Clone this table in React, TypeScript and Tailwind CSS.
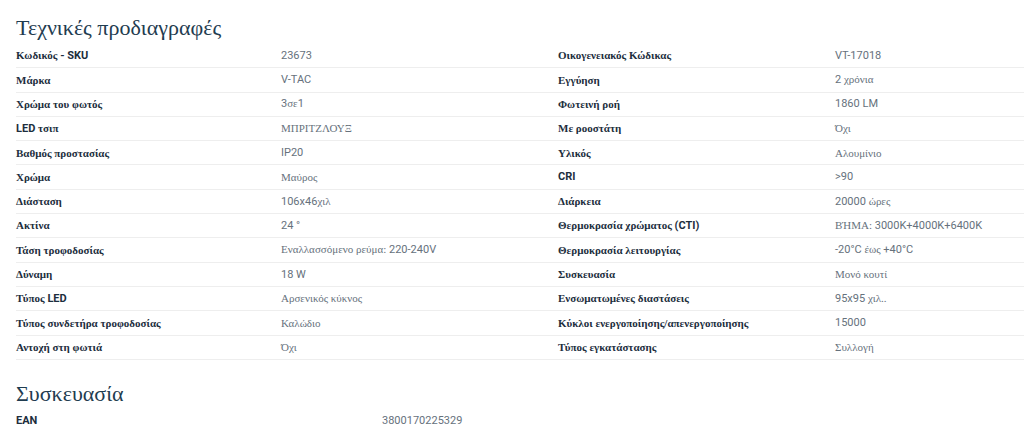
import React from "react";

const GREEK = /([\u0370-\u03FF\u1F00-\u1FFF]+(?:[\s.,:/]+[\u0370-\u03FF\u1F00-\u1FFF]+)*[.:,]*)/;

function Mixed({ text }: { text: string }) {
  const parts = text.split(GREEK).filter((p) => p !== "");
  return (
    <span>
      {parts.map((p, i) =>
        /^[\u0370-\u03FF\u1F00-\u1FFF]/.test(p) ? (
          <span key={i} className="font-['Liberation_Serif',serif]">
            {p}
          </span>
        ) : (
          <span key={i} className="font-['Roboto',sans-serif] whitespace-pre">
            {p}
          </span>
        )
      )}
    </span>
  );
}

const rows: [string, string, string, string][] = [
  ["Κωδικός - SKU", "23673", "Οικογενειακός Κώδικας", "VT-17018"],
  ["Μάρκα", "V-TAC", "Εγγύηση", "2 χρόνια"],
  ["Χρώμα του φωτός", "3σε1", "Φωτεινή ροή", "1860 LM"],
  ["LED τσιπ", "ΜΠΡΙΤΖΛΟΥΞ", "Με ροοστάτη", "Όχι"],
  ["Βαθμός προστασίας", "IP20", "Υλικός", "Αλουμίνιο"],
  ["Χρώμα", "Μαύρος", "CRI", ">90"],
  ["Διάσταση", "106x46χιλ", "Διάρκεια", "20000 ώρες"],
  ["Ακτίνα", "24 °", "Θερμοκρασία χρώματος (CTI)", "ΒΉΜΑ: 3000K+4000K+6400K"],
  ["Τάση τροφοδοσίας", "Εναλλασσόμενο ρεύμα: 220-240V", "Θερμοκρασία λειτουργίας", "-20°C έως +40°C"],
  ["Δύναμη", "18 W", "Συσκευασία", "Μονό κουτί"],
  ["Τύπος LED", "Αρσενικός κύκνος", "Ενσωματωμένες διαστάσεις", "95x95 χιλ.."],
  ["Τύπος συνδετήρα τροφοδοσίας", "Καλώδιο", "Κύκλοι ενεργοποίησης/απενεργοποίησης", "15000"],
  ["Αντοχή στη φωτιά", "Όχι", "Τύπος εγκατάστασης", "Συλλογή"],
];

const cellBase = "h-[24.3px] flex items-center border-b border-[#eeeeee] text-[11px] whitespace-nowrap";
const labelCls = cellBase + " font-bold text-[#1c2e3d]";
const valueCls = cellBase + " text-[#66717c]";

export default function App() {
  return (
    <div className="w-[1024px] h-[431px] overflow-hidden bg-white">
      <div className="pl-4">
        <h2 className="h-[44px] pt-[15px] text-[22px] leading-[26px] text-[#1f3c50] font-['Liberation_Serif',serif] font-normal">
          Τεχνικές προδιαγραφές
        </h2>
        <div className="grid grid-cols-[265px_277px_277px_1fr]">
          {rows.map((r, i) => (
            <React.Fragment key={i}>
              <div className={labelCls}>
                <Mixed text={r[0]} />
              </div>
              <div className={valueCls}>
                <Mixed text={r[1]} />
              </div>
              <div className={labelCls}>
                <Mixed text={r[2]} />
              </div>
              <div className={valueCls}>
                <Mixed text={r[3]} />
              </div>
            </React.Fragment>
          ))}
        </div>
        <h2 className="mt-[21px] h-[28px] text-[22px] leading-[26px] text-[#1f3c50] font-['Liberation_Serif',serif] font-normal">
          Συσκευασία
        </h2>
        <div className="grid grid-cols-[366px_1fr]">
          <div className="h-[24px] flex items-center text-[11px] font-bold text-[#1c2e3d] font-['Roboto',sans-serif]">
            EAN
          </div>
          <div className="h-[24px] flex items-center text-[11px] text-[#66717c] font-['Roboto',sans-serif]">
            3800170225329
          </div>
        </div>
      </div>
    </div>
  );
}
